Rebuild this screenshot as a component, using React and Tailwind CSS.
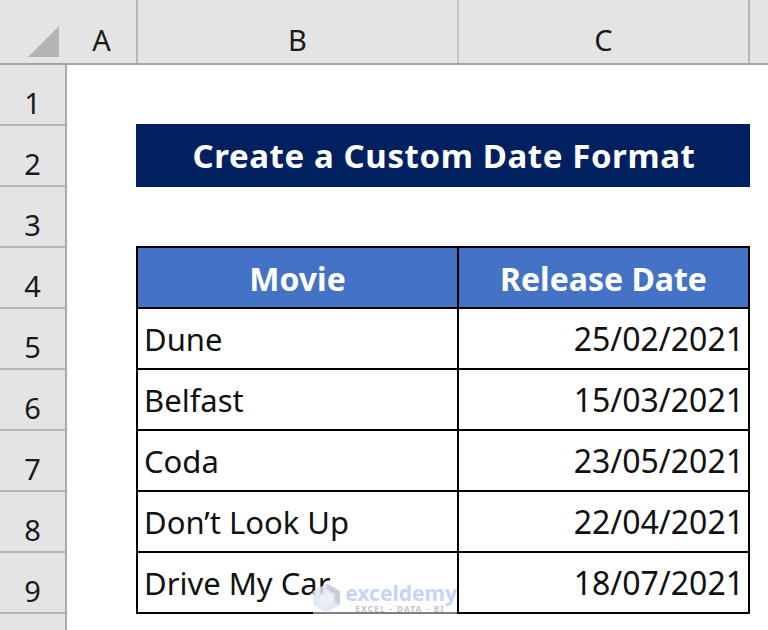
const rows = [
  ["Dune", "25/02/2021"],
  ["Belfast", "15/03/2021"],
  ["Coda", "23/05/2021"],
  ["Don’t Look Up", "22/04/2021"],
  ["Drive My Car", "18/07/2021"],
];

const rowNumbers = [1, 2, 3, 4, 5, 6, 7, 8, 9];

const ColumnHead = ({ label, className }) => (
  <div className={`flex h-full items-center justify-center pt-[16px] ${className}`}>
    <span className="text-[29px] leading-none text-[#1a1a1a]">{label}</span>
  </div>
);

const App = () => {
  return (
    <div className="relative h-[630px] w-[768px] overflow-hidden bg-white font-['Noto_Sans',sans-serif]">
      {/* Column headers */}
      <div className="flex h-[65px] border-b-2 border-[#a3a3a3] bg-[#e4e4e4]">
        <div className="relative w-[67px] shrink-0">
          <svg className="absolute left-[27px] top-[25px]" width="33" height="33" viewBox="0 0 33 33">
            <path d="M32 1V32H1Z" fill="#b4b4b4" />
          </svg>
        </div>
        <ColumnHead label="A" className="w-[71px] border-r-2 border-[#b5b5b5]" />
        <ColumnHead label="B" className="w-[321px] border-r-2 border-[#c4c4c4]" />
        <ColumnHead label="C" className="w-[291px] border-r-2 border-[#b5b5b5]" />
      </div>

      <div className="flex h-[565px]">
        {/* Row headers */}
        <div className="w-[67px] shrink-0 border-r-2 border-[#a9a9a9] bg-[#e4e4e4]">
          {rowNumbers.map((n) => (
            <div key={n} className="flex h-[61px] items-center justify-center border-b-2 border-[#b5b5b5] pt-[16px]">
              <span className="text-[29px] leading-none text-[#1a1a1a]">{n}</span>
            </div>
          ))}
        </div>

        {/* Sheet */}
        <div className="flex-1 pl-[69px] pt-[59px]">
          <div className="flex h-[63px] w-[614px] items-center justify-center bg-[#002060] pl-[2px]">
            <span className="text-[33px] font-bold leading-none tracking-[0.6px] text-white">Create a Custom Date Format</span>
          </div>

          <div className="mt-[59px] w-[614px] border-x-2 border-t-2 border-black text-[31px] leading-none text-[#111]">
            <div className="grid h-[61px] grid-cols-[321px_1fr] border-b-2 border-black bg-[#4472c4] text-[32px] font-bold text-white">
              <div className="flex items-center justify-center border-r-2 border-black pt-[2px]">Movie</div>
              <div className="flex items-center justify-center pt-[2px]">Release Date</div>
            </div>
            {rows.map(([movie, date]) => (
              <div key={movie} className="grid h-[61px] grid-cols-[321px_1fr] border-b-2 border-black">
                <div className="flex items-center border-r-2 border-black pl-[6px] pt-[1px]">{movie}</div>
                <div className="flex items-center justify-end pr-[4px] pt-[1px] text-[32px]">{date}</div>
              </div>
            ))}
          </div>
        </div>
      </div>

      {/* Watermark */}
      <div className="absolute left-[313px] top-[583px] flex w-[144px] items-start gap-[5px]">
        <svg width="28" height="30" viewBox="0 0 28 30">
          <path d="M14 0L28 8V22L14 30L0 22V8Z" fill="#dde5f8" fillOpacity="0.85" />
          <path d="M14 0L28 8V22L22 19V11L14 6Z" fill="#c6cad0" fillOpacity="0.85" />
          <path d="M14 8L21 12V19L14 23L7 19V12Z" fill="#eceef2" fillOpacity="0.85" />
        </svg>
        <div className="flex flex-col">
          <span className="text-[21px] font-bold leading-[21px] text-[#c6d4f6]">exceldemy</span>
          <span className="ml-[10px] mt-[1px] text-[8px] font-bold leading-[8px] tracking-[1.4px] text-[#c4c4c4]">EXCEL - DATA - BI</span>
        </div>
      </div>
      <div className="absolute left-[313px] top-[612px] h-[2px] w-[144px] bg-white/50" />
    </div>
  );
};

export default App;
